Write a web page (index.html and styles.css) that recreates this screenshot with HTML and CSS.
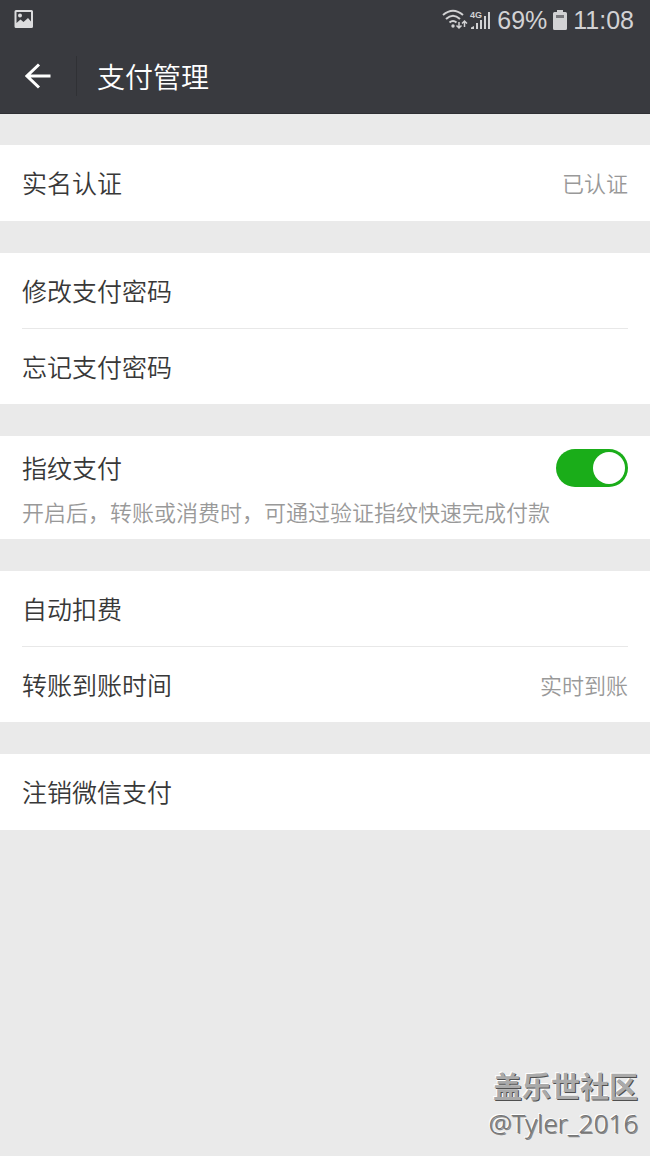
FILE: index.html
```html
<!DOCTYPE html>
<html lang="zh-CN">
<head>
<meta charset="utf-8">
<meta name="viewport" content="width=device-width, initial-scale=1">
<title>支付管理</title>
<link rel="stylesheet" href="styles.css">
</head>
<body>
<div class="screen">
  <header class="header">
    <div class="status">
      <svg class="status-photo" width="20" height="18" viewBox="0 0 20 18" aria-hidden="true">
        <path fill="#dcdcde" fill-rule="evenodd" d="M2 0h15.500a1.500 1.500 0 0 1 1.500 1.500v15a1.500 1.500 0 0 1-1.500 1.500h-15.500a1.500 1.500 0 0 1-1.500-1.500v-15a1.500 1.500 0 0 1 1.500-1.500zM2.500 2v11l4-3.500 3 2.500 4.500-4 3 3.500v-9.500z"/>
        <circle cx="6" cy="5.500" r="2" fill="#dcdcde"/>
      </svg>
      <div class="status-right">
        <svg width="49" height="22" viewBox="0 0 49 22" aria-hidden="true">
          <g fill="none" stroke="#d2d2d4" stroke-width="2">
            <path d="M1 6Q11 -2.500 21 6"/>
            <path d="M4 10Q11 3.500 18 10"/>
            <path d="M7.500 13.500Q11 10.500 14.500 13.500"/>
          </g>
          <circle cx="11" cy="17" r="1.700" fill="#d2d2d4"/>
          <path d="M17 13v6m-2.500-2.500l2.500 2.500 2.500-2.500M22.500 18v-6m-2.500 2.500l2.500-2.500 2.500 2.500" fill="none" stroke="#d2d2d4" stroke-width="1.500"/>
          <text x="28" y="9" class="network">4G</text>
          <path d="M29 20v-1.500l3-1.500v3zM34 20v-6h2v6zM38 20v-9h2v9zM42 20v-13h2v13zM46 20v-17h2v17z" fill="#d2d2d4"/>
        </svg>
        <span>69%</span>
        <svg width="14" height="20" viewBox="0 0 14 20" aria-hidden="true">
          <path d="M4 0h6v2h2.500q1.500 0 1.500 1.500v15q0 1.500-1.500 1.500h-11q-1.500 0-1.500-1.500v-15q0-1.500 1.500-1.500h2.500z" fill="#d2d2d4"/>
          <path d="M3 5h8v3h-8z" fill="#77777b"/>
        </svg>
        <time>11:08</time>
      </div>
    </div>
    <div class="bar">
      <button class="back" type="button" aria-label="返回">
        <svg width="26" height="26" viewBox="0 0 26 26" aria-hidden="true"><path d="M25.500 13H2M14 1.500L2 13l12 11.500" fill="none" stroke="#fff" stroke-width="3"/></svg>
      </button>
      <h1 class="title">支付管理</h1>
    </div>
  </header>
  <main class="groups">
    <section class="group">
      <a class="row" href="#verify"><span>实名认证</span><span class="value">已认证</span></a>
    </section>
    <section class="group">
      <a class="row" href="#change">修改支付密码</a>
      <a class="row" href="#forgot">忘记支付密码</a>
    </section>
    <section class="group setting">
      <div class="setting-line">
        <label for="finger">指纹支付</label>
        <input class="switch" id="finger" type="checkbox" role="switch" aria-describedby="finger-note" checked>
      </div>
      <p class="note" id="finger-note">开启后，转账或消费时，可通过验证指纹快速完成付款</p>
    </section>
    <section class="group">
      <a class="row" href="#auto">自动扣费</a>
      <a class="row" href="#arrival"><span>转账到账时间</span><span class="value">实时到账</span></a>
    </section>
    <section class="group">
      <a class="row" href="#close">注销微信支付</a>
    </section>
  </main>
  <footer class="mark">
    <div class="mark-site">盖乐世社区</div>
    <div class="mark-user">@Tyler_2016</div>
  </footer>
</div>
</body>
</html>
```
FILE: styles.css
```css
* { box-sizing: border-box; }
body {
  margin: 0;
  background: #eaeaea;
  color: #383838;
  font: 350 25px/36px "Noto Sans CJK SC", sans-serif;
}
.screen { min-height: 100vh; display: flex; flex-direction: column; }
.header { background: #393a3f; color: #fff; border-bottom: 1px solid #2e2f33; }
.status {
  height: 40px;
  padding: 0 16px 0 14px;
  display: flex;
  align-items: center;
  justify-content: space-between;
  color: #d2d2d4;
}
.status-photo { margin-bottom: 2px; }
.status-right {
  display: flex;
  align-items: center;
  gap: 6px;
  font: 400 25px/40px "Liberation Sans", Arial, sans-serif;
}
.network { font: 700 9px "Liberation Sans", sans-serif; fill: #d2d2d4; }
.bar { height: 73px; padding-bottom: 1px; display: flex; align-items: center; }
.back {
  width: 77px;
  height: 40px;
  padding: 0;
  border: 0;
  border-right: 1px solid #303135;
  background: none;
  display: flex;
  align-items: center;
  justify-content: center;
}
.title { margin: 0; padding: 0 0 1px 20px; font-size: 28px; line-height: 40px; font-weight: 350; }
.groups { padding-top: 31px; display: flex; flex-direction: column; gap: 32px; }
.group { background: #fff; padding: 0 22px; }
.row {
  min-height: 76px;
  padding-bottom: 2px;
  display: flex;
  align-items: center;
  justify-content: space-between;
  color: inherit;
  text-decoration: none;
}
.row + .row { min-height: 75px; }
.row:not(:last-child) { border-bottom: 1px solid #e8e8e8; }
.value { font-size: 22px; color: #999; }
.setting { padding-top: 13px; padding-bottom: 12px; }
.setting-line { display: flex; align-items: center; justify-content: space-between; }
.setting-line label { padding-bottom: 2px; }
.switch {
  appearance: none;
  width: 72px;
  height: 38px;
  margin: 0;
  padding: 3px;
  border-radius: 20px;
  background: #c8c8c8;
  display: flex;
}
.switch::before { content: ""; width: 32px; height: 32px; border-radius: 50%; background: #fff; }
.switch:checked { background: #1aad19; justify-content: flex-end; }
.note { margin: 8px 0 0; font-size: 22px; line-height: 32px; color: #999; }
.mark {
  margin-top: auto;
  padding: 0 12px 15px;
  text-align: right;
  color: #aaa;
  text-shadow: 1px 1px 0 #505050, -1px -1px 0 #fff;
}
.mark-site { font-size: 29px; line-height: 40px; font-weight: 700; }
.mark-user {
  font: 300 26px/36px "Noto Sans", sans-serif;
  color: #777;
  text-shadow: 1px 1px 0 #888, -1px -1px 0 #fff;
}
```
